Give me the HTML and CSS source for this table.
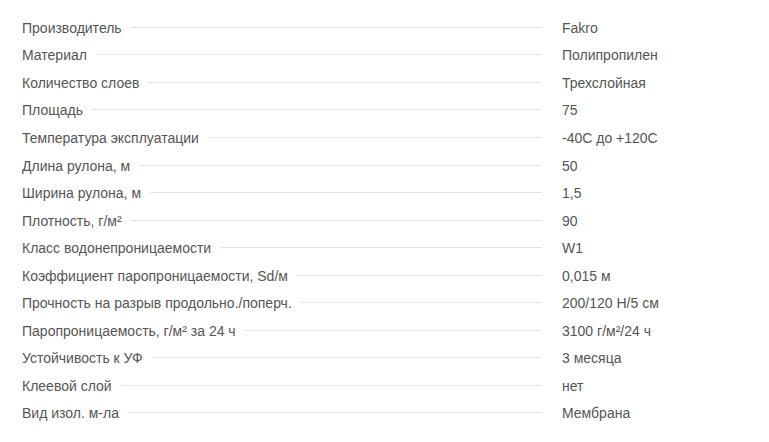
FILE: index.html
```html
<!DOCTYPE html>
<html lang="ru">
<head>
<meta charset="utf-8">
<link rel="stylesheet" href="styles.css">
</head>
<body>
<ul class="specs">
  <li class="row"><span class="name">Производитель</span><span class="dots"></span><span class="val">Fakro</span></li>
  <li class="row"><span class="name">Материал</span><span class="dots"></span><span class="val">Полипропилен</span></li>
  <li class="row"><span class="name">Количество слоев</span><span class="dots"></span><span class="val">Трехслойная</span></li>
  <li class="row"><span class="name">Площадь</span><span class="dots"></span><span class="val">75</span></li>
  <li class="row"><span class="name">Температура эксплуатации</span><span class="dots"></span><span class="val">-40С до +120С</span></li>
  <li class="row"><span class="name">Длина рулона, м</span><span class="dots"></span><span class="val">50</span></li>
  <li class="row"><span class="name">Ширина рулона, м</span><span class="dots"></span><span class="val">1,5</span></li>
  <li class="row"><span class="name">Плотность, г/м²</span><span class="dots"></span><span class="val">90</span></li>
  <li class="row"><span class="name">Класс водонепроницаемости</span><span class="dots"></span><span class="val">W1</span></li>
  <li class="row"><span class="name">Коэффициент паропроницаемости, Sd/м</span><span class="dots"></span><span class="val">0,015 м</span></li>
  <li class="row"><span class="name">Прочность на разрыв продольно./поперч.</span><span class="dots"></span><span class="val">200/120 Н/5 см</span></li>
  <li class="row"><span class="name">Паропроницаемость, г/м² за 24 ч</span><span class="dots"></span><span class="val">3100 г/м²/24 ч</span></li>
  <li class="row"><span class="name">Устойчивость к УФ</span><span class="dots"></span><span class="val">3 месяца</span></li>
  <li class="row"><span class="name">Клеевой слой</span><span class="dots"></span><span class="val">нет</span></li>
  <li class="row"><span class="name">Вид изол. м-ла</span><span class="dots"></span><span class="val">Мембрана</span></li>
</ul>
</body>
</html>
```
FILE: styles.css
```css
html, body {
  margin: 0;
  padding: 0;
  background: #ffffff;
}
body {
  font-family: "Liberation Sans", Arial, sans-serif;
  font-size: 14px;
  color: #555555;
}
.specs {
  list-style: none;
  margin: 0;
  padding: 14px 0 0 22px;
}
.row {
  display: flex;
  align-items: center;
  height: 27.55px;
  width: 727px;
}
.name {
  white-space: nowrap;
}
.dots {
  flex: 1;
  height: 1px;
  background: #e3e3e3;
  margin: 0 0 1px 9px;
}
.val {
  flex: 0 0 187px;
  margin-left: 20px;
  white-space: nowrap;
}
```
